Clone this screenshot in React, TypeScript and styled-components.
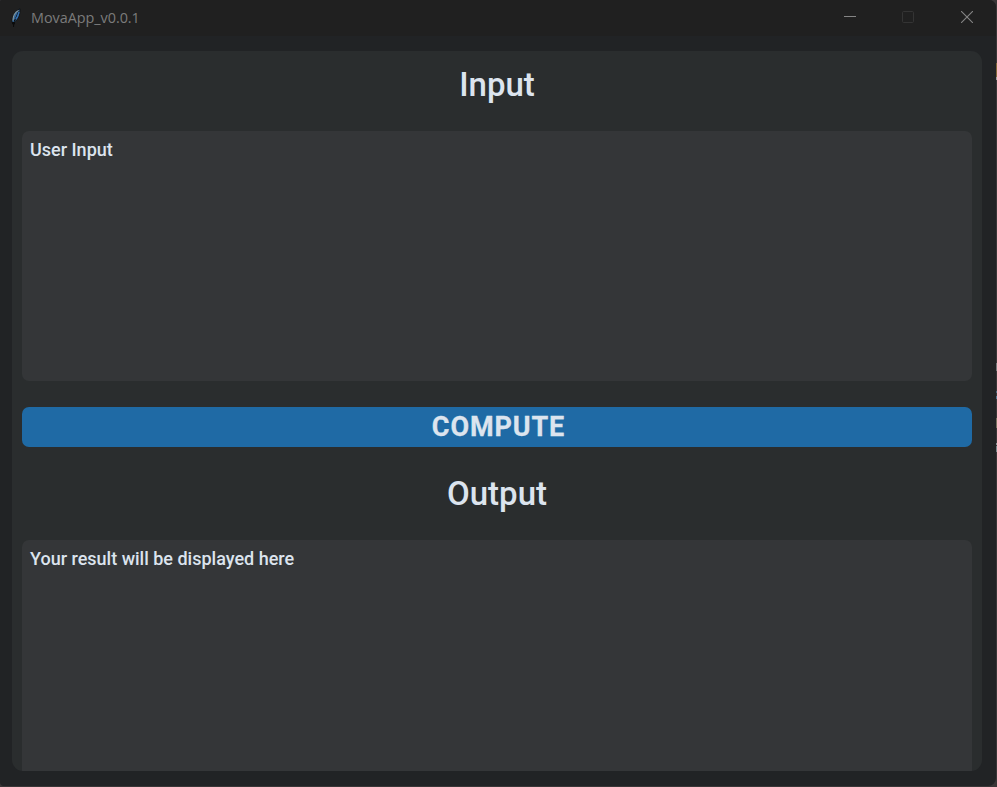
import React from "react";
import styled, { createGlobalStyle } from "styled-components";

const GlobalStyle = createGlobalStyle`
  * { box-sizing: border-box; }
  body { margin: 0; background: #39393a; overflow: hidden; }
`;

const Desktop = styled.div`
  position: relative;
  width: 997px;
  height: 787px;
  padding: 0 1px 1px 0;
  background: #393637;
`;

const Window = styled.main`
  display: flex;
  flex-direction: column;
  width: 996px;
  height: 786px;
  overflow: hidden;
  border-radius: 2px 7px 8px 4px;
  background: #212325;
  color: #dce4ee;
  font-family: Roboto, sans-serif;
`;

const TitleBar = styled.header`
  display: flex;
  align-items: center;
  flex: 0 0 36px;
  padding-left: 10px;
  background: #202020;
`;

const Title = styled.span`
  flex: 1;
  margin: 0 0 1px 9px;
  color: #7b7b7b;
  font: 14.4px/20px "Open Sans", sans-serif;
  letter-spacing: -0.03px;
`;

const WindowControl = styled.button`
  display: flex;
  align-items: center;
  justify-content: center;
  width: 58.5px;
  height: 34px;
  margin-bottom: 2px;
  padding: 0;
  border: 0;
  background: transparent;
`;

const Panel = styled.section`
  display: flex;
  flex-direction: column;
  width: 970px;
  height: 720px;
  margin: 15px 0 0 12px;
  padding: 0 10px;
  overflow: hidden;
  border-radius: 11px;
  background: #2a2d2e;
`;

const Heading = styled.h1<{ $height: number; $shift: number }>`
  flex: 0 0 ${(p) => p.$height}px;
  margin: 0;
  padding-top: ${(p) => p.$shift}px;
  text-align: center;
  font-size: 33px;
  font-weight: 500;
  line-height: 40px;
`;

const TextBox = styled.div<{ $height: number; $clipped?: boolean }>`
  flex: 0 0 ${(p) => p.$height}px;
  padding: 7px 8px;
  border-radius: ${(p) => (p.$clipped ? "7px 7px 0 0" : "7px")};
  background: #343638;
  font-size: 18px;
  font-weight: 500;
  line-height: 24px;
`;

const ComputeButton = styled.button`
  flex: 0 0 40px;
  margin-top: 26px;
  padding: 0 0 0 3px;
  border: 0;
  border-radius: 7px;
  background: #1f6aa5;
  color: #dce4ee;
  font: 700 27px/40px Roboto, sans-serif;
  letter-spacing: 0.9px;
  -webkit-text-stroke: 0.3px #dce4ee;
`;

const EdgeMark = styled.i<{ $top: number; $height: number; $color: string }>`
  position: absolute;
  right: 0;
  top: ${(p) => p.$top}px;
  width: 1px;
  height: ${(p) => p.$height}px;
  background: ${(p) => p.$color};
`;

const edgeMarks = [
  { top: 63, height: 14, color: "#806437" },
  { top: 77, height: 3, color: "#a0a0a0" },
  { top: 363, height: 8, color: "#77797a" },
  { top: 391, height: 2, color: "#4b6980" },
  { top: 396, height: 3, color: "#527894" },
  { top: 418, height: 10, color: "#77705f" },
  { top: 443, height: 2, color: "#8b9294" },
  { top: 446, height: 6, color: "#77868a" },
];

const Feather = () => (
  <svg width="12" height="20" viewBox="0 0 12 20">
    <path d="M2 14.5 C1.6 9 4.5 3.5 10 .8 C10.2 7 8 11.5 4 14.5Z" fill="#34699e" stroke="#101315" strokeWidth="1" />
    <path d="M3 12.5 C3 8 5.5 4 8.5 2.5" fill="none" stroke="#84979c" strokeWidth="1.1" />
    <path d="M4 13.5 C6.2 10 7 7 8.7 3.5 M3.8 14 L3.5 19" fill="none" stroke="#0b0b0b" strokeWidth="1.1" />
    <path d="M2 15.2H5" stroke="#0b0b0b" strokeWidth="2" />
    <path d="M5.8 11.2 C7.8 9 8.5 6 9 4" fill="none" stroke="#3673b2" strokeWidth="1.5" />
  </svg>
);

export default function App() {
  return (
    <Desktop>
      <GlobalStyle />
      <Window>
        <TitleBar>
          <Feather />
          <Title>MovaApp_v0.0.1</Title>
          <WindowControl aria-label="Minimize">
            <svg width="12" height="12" viewBox="0 0 12 12">
              <path d="M0 5.5H12" stroke="#858585" />
            </svg>
          </WindowControl>
          <WindowControl aria-label="Maximize" disabled>
            <svg width="12" height="12" viewBox="0 0 12 12">
              <rect x=".5" y=".5" width="11" height="11" rx="1" fill="none" stroke="#343434" />
            </svg>
          </WindowControl>
          <WindowControl aria-label="Close">
            <svg width="12" height="12" viewBox="0 0 12 12">
              <path d="M0 0L12 12M12 0L0 12" stroke="#858585" strokeWidth="1.1" />
            </svg>
          </WindowControl>
        </TitleBar>
        <Panel>
          <Heading $height={80} $shift={14}>Input</Heading>
          <TextBox $height={250}>User Input</TextBox>
          <ComputeButton>COMPUTE</ComputeButton>
          <Heading $height={93} $shift={27}>Output</Heading>
          <TextBox $height={231} $clipped>Your result will be displayed here</TextBox>
        </Panel>
      </Window>
      {edgeMarks.map((m) => (
        <EdgeMark key={m.top} $top={m.top} $height={m.height} $color={m.color} />
      ))}
    </Desktop>
  );
}
